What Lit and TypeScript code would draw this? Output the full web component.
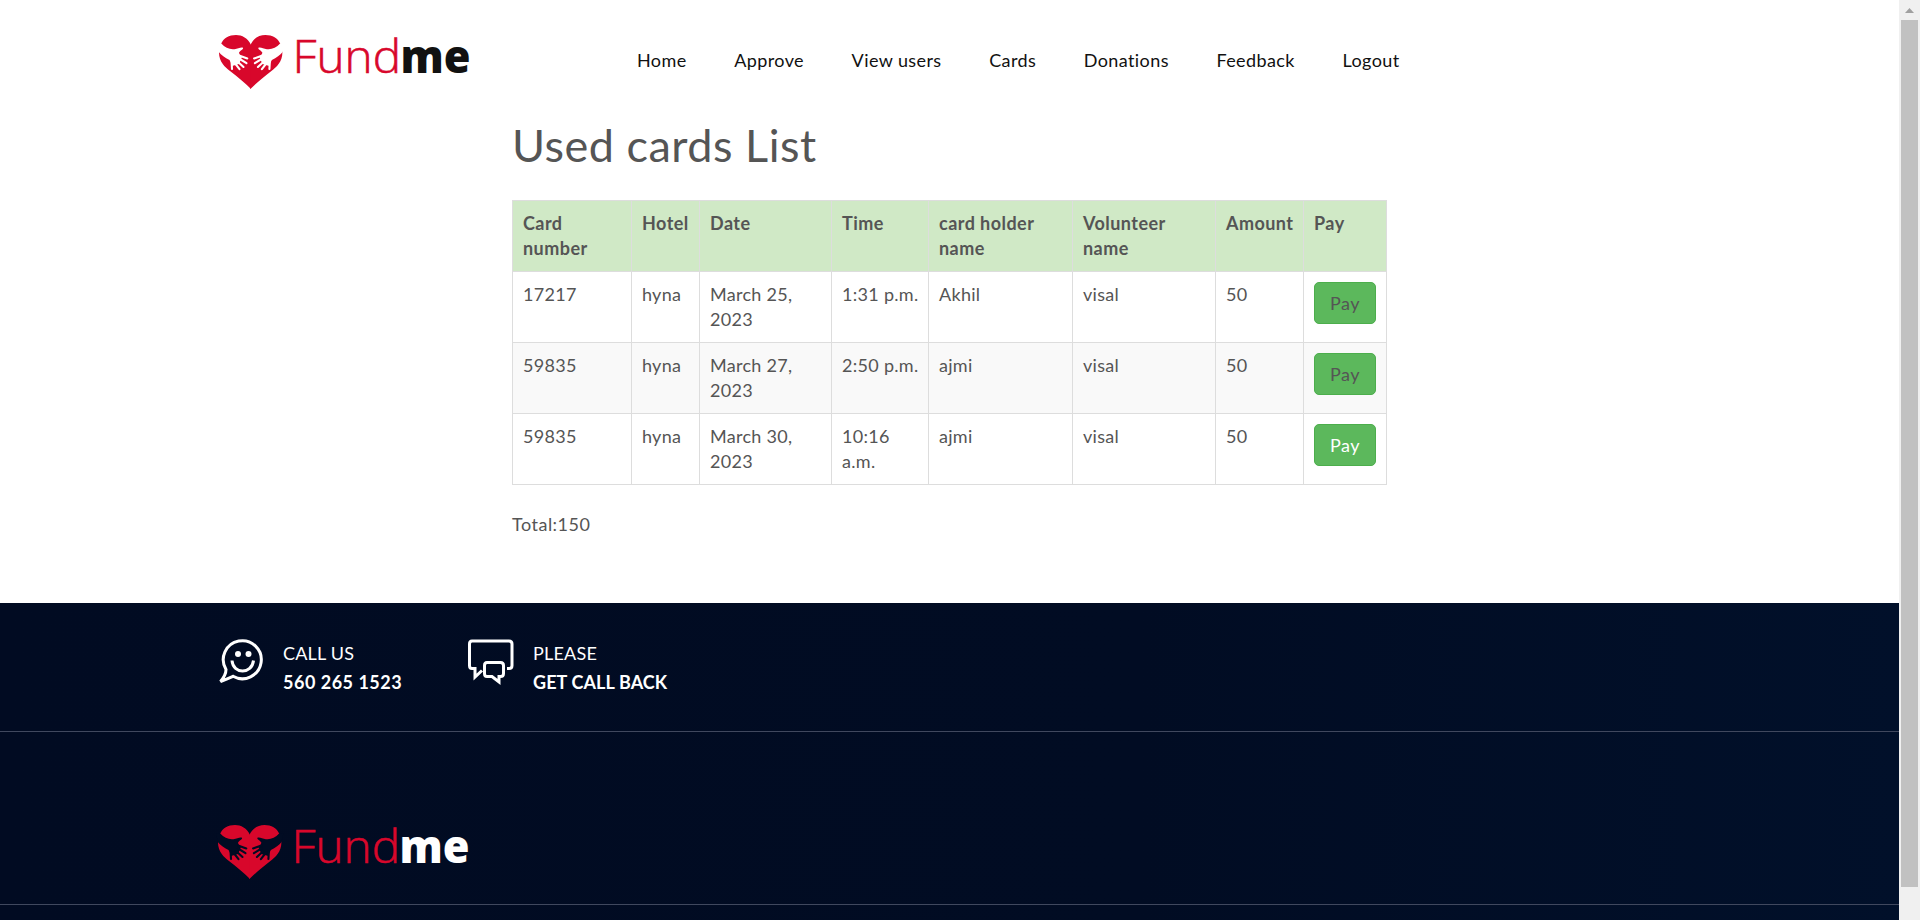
import { LitElement, html, css, svg } from "lit";
import { customElement, property } from "lit/decorators.js";

interface CardRow {
  card: string;
  hotel: string;
  date: string;
  time: string;
  holder: string;
  volunteer: string;
  amount: string;
  open: boolean;
}

@customElement("fund-logo")
class FundLogo extends LitElement {
  @property() tone = "dark";

  static styles = css`
    :host { display: block; width: 260px; height: 60px; }
    svg { display: block; overflow: visible; }
    .fund { font: 300 46.5px "Open Sans", sans-serif; fill: #d8072b; stroke: #d8072b; stroke-width: 0.6; letter-spacing: 0; }
    .me { font: 800 46px "Open Sans", sans-serif; letter-spacing: 0; }
    .me.dark { fill: #111; }
    .me.light { fill: #fff; }
    .red { fill: #d8072b; }
    .hand.dark { fill: #fff; stroke: #fff; }
    .hand.light { fill: #010c23; stroke: #010c23; }
    .palm { stroke: none; }
    .fingers { fill: none; stroke-width: 2.1; stroke-linecap: round; }
  `;

  render() {
    const half = svg`
      <path class="red" d="M32 10C29 3 23 0 17 0C10 0 4.500 3 2 9L0 17.500C0 27 6 32 11 36C20 43 27 49 32 54Z"/>
      <g class="hand ${this.tone}">
        <path class="palm" d="M2.300 8.600C6 13 11 14.800 15.500 14.200C19 13.700 21.500 12 24 12.700C24.700 14.500 21 15.300 20 17.800C20.500 20 22 21 23 22L20 29L13 31C13 29 11.500 27 10.500 25C6 23 2 20 0 17.300L-2 8.300Z"/>
        <path class="fingers" d="M20 20.500L28.300 23.500M20 23.500L27.500 28.200M18 26L24.500 32M15 27L20.500 34.200M12.500 26L13 34"/>
      </g>`;
    return html`<svg width="260" height="60" viewBox="0 0 260 60">
      ${half}<g transform="translate(63.400 0) scale(-1 1)">${half}</g>
      <text class="fund" x="73.500" y="38" textLength="108.500" lengthAdjust="spacingAndGlyphs">Fund</text>
      <text class="me ${this.tone}" x="181.500" y="38" textLength="70" lengthAdjust="spacingAndGlyphs">me</text>
    </svg>`;
  }
}

@customElement("app-root")
class AppRoot extends LitElement {
  private nav = ["Home", "Approve", "View users", "Cards", "Donations", "Feedback", "Logout"];
  private widths = [119, 68, 132, 97, 144, 143, 88, 83];
  private heads = ["Card number", "Hotel", "Date", "Time", "card holder name", "Volunteer name", "Amount", "Pay"];
  private rows: CardRow[] = [
    { card: "17217", hotel: "hyna", date: "March 25, 2023", time: "1:31\u00a0p.m.", holder: "Akhil", volunteer: "visal", amount: "50", open: false },
    { card: "59835", hotel: "hyna", date: "March 27, 2023", time: "2:50\u00a0p.m.", holder: "ajmi", volunteer: "visal", amount: "50", open: false },
    { card: "59835", hotel: "hyna", date: "March 30, 2023", time: "10:16 a.m.", holder: "ajmi", volunteer: "visal", amount: "50", open: true },
  ];

  static styles = css`
    :host {
      display: flex; width: 100%; height: 920px; overflow: hidden; background: #fff;
      font: 400 18px/25px Lato, sans-serif; letter-spacing: 0.4px; color: #555;
    }
    * { box-sizing: border-box; }
    .page { flex: 1; min-width: 0; display: flex; flex-direction: column; }
    header { display: flex; height: 121px; padding: 35px 0 0 219px; flex: none; }
    nav { display: flex; gap: 47.6px; margin-left: 158px; padding-top: 13px; color: #111; }
    nav a { white-space: nowrap; }
    main { width: 875px; margin: 0 auto; height: 482px; flex: none; }
    h1 { font-size: 45px; font-weight: 400; line-height: 48px; margin: 0; letter-spacing: 0.5px; }
    table { width: 875px; margin-top: 31px; border-collapse: collapse; table-layout: fixed; }
    th, td { height: 71px; padding: 10px; border: 1px solid #ddd; text-align: left; vertical-align: top; }
    td { letter-spacing: 0.3px; }
    th { background: #d0e9c6; font-weight: 700; letter-spacing: 0.45px; }
    tr.alt td { background: #f9f9f9; }
    button {
      display: block; width: 62px; height: 42px; padding: 0; border: 1px solid #4cae4c; border-radius: 5px;
      background: #5cb85c; color: #555; font: inherit; letter-spacing: 0.5px;
    }
    button.open { color: #fff; }
    p { margin: 27px 0 0; letter-spacing: 0.5px; }
    footer { flex: 1; color: #fff; background: linear-gradient(90deg, #010b22, #010c23 60%, #01102a); }
    .contacts { display: flex; height: 129px; padding: 36px 0 0 218px; border-bottom: 1px solid #40485e; }
    .contact { display: flex; width: 250px; }
    .contact svg { flex: none; width: 48px; height: 48px; fill: none; stroke: #fff; stroke-width: 3; }
    .contact svg .dot { fill: #fff; stroke: none; }
    .contact div { margin-left: 17px; line-height: 29px; white-space: nowrap; letter-spacing: 0.2px; }
    .contact strong { display: block; font-weight: 700; }
    .contact .phone { letter-spacing: 0.5px; }
    .contact .callback { letter-spacing: 0.1px; }
    .brand { height: 173px; padding: 93px 0 0 218px; border-bottom: 1px solid #40485e; }
    .scroll { width: 21px; flex: none; background: #f0f0f0; display: flex; flex-direction: column; align-items: center; }
    .scroll svg { width: 9px; height: 5px; margin: 8px 0 7px; fill: #a0a0a0; }
    .thumb { width: 17px; height: 867px; background: #c1c1c1; }
  `;

  render() {
    return html`
      <div class="page">
        <header>
          <fund-logo></fund-logo>
          <nav>${this.nav.map((n) => html`<a>${n}</a>`)}</nav>
        </header>
        <main>
          <h1>Used cards List</h1>
          <table>
            <colgroup>${this.widths.map((w) => html`<col style="width:${w}px">`)}</colgroup>
            <thead><tr>${this.heads.map((h) => html`<th>${h}</th>`)}</tr></thead>
            <tbody>${this.rows.map((r, i) => html`<tr class=${i % 2 ? "alt" : ""}>
              <td>${r.card}</td><td>${r.hotel}</td><td>${r.date}</td><td>${r.time}</td>
              <td>${r.holder}</td><td>${r.volunteer}</td><td>${r.amount}</td>
              <td><button class=${r.open ? "open" : ""}>Pay</button></td>
            </tr>`)}</tbody>
          </table>
          <p>Total:150</p>
        </main>
        <footer>
          <section class="contacts">
            <div class="contact">
              <svg viewBox="0 0 48 48">
                <path d="M15 37.300A19 19 0 1 0 8 30.500Q8 36 2.500 42.500Q9 40 15 37.300Z"/>
                <circle class="dot" cx="20" cy="15" r="3"/><circle class="dot" cx="30.500" cy="15" r="3"/>
                <path d="M14 21.500C15 35.500 34 35.500 35.500 21.500"/>
              </svg>
              <div>CALL US<strong class="phone">560 265 1523</strong></div>
            </div>
            <div class="contact">
              <svg viewBox="0 0 48 48">
                <path d="M39 29.500H41Q44 29.500 44 26.500V5Q44 2 41 2H4Q1.500 2 1.500 5V26.500Q1.500 29.500 4 29.500H7V38L14 31.500"/>
                <path d="M19 23.500H32.500Q35.500 23.500 35.500 26.500V34.500Q35.500 37.500 32.500 37.500H31V43L24 37.500H19Q16.500 37.500 16.500 34.500V26.500Q16.500 23.500 19 23.500Z"/>
              </svg>
              <div>PLEASE<strong class="callback">GET CALL BACK</strong></div>
            </div>
          </section>
          <section class="brand"><fund-logo tone="light"></fund-logo></section>
        </footer>
      </div>
      <div class="scroll"><svg viewBox="0 0 9 5"><path d="M4.500 0L9 5H0Z"/></svg><div class="thumb"></div></div>
    `;
  }
}
